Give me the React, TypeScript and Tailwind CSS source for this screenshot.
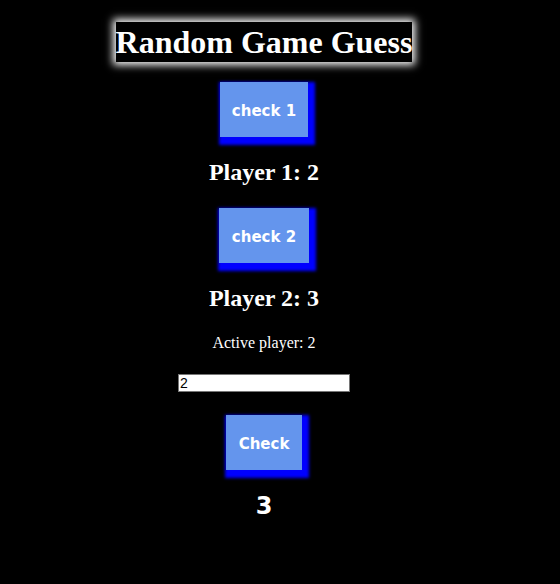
const comic = "font-['Comic_Sans_MS','DejaVu_Sans',sans-serif]"

const GameButton = ({ label, width }: { label: string; width: string }) => (
  <button
    className={`${width} h-[55px] pt-[3px] bg-[#6495ed] text-white font-bold text-[15px] ${comic} shadow-[3px_4px_3px_4px_#0000ff]`}
  >
    {label}
  </button>
)

export default function App() {
  return (
    <div className="min-h-[584px] bg-black text-white font-['Liberation_Serif',serif]">
      <div className="w-[528px] flex flex-col items-center">
        <h1 className="mt-[22px] h-[40px] w-[296px] flex items-center justify-center bg-black text-[32px] font-bold leading-none whitespace-nowrap shadow-[0_0_8px_3px_#ffffff]">
          Random Game Guess
        </h1>

        <div className="mt-[20px]">
          <GameButton label="check 1" width="w-[88px]" />
        </div>
        <h2 className="mt-[21px] h-[28px] text-[24px] font-bold leading-[28px]">Player 1: 2</h2>

        <div className="mt-[22px]">
          <GameButton label="check 2" width="w-[90px]" />
        </div>
        <h2 className="mt-[21px] h-[28px] text-[24px] font-bold leading-[28px]">Player 2: 3</h2>

        <p className="mt-[22px] h-[18px] text-[16px] leading-[18px]">Active player: 2</p>

        <input
          defaultValue="2"
          className="mt-[22px] w-[172px] h-[18px] bg-white text-black text-[14px] leading-none px-[1px] border border-[#767676] font-['Liberation_Sans',sans-serif] outline-none"
        />

        <div className="mt-[23px]">
          <GameButton label="Check" width="w-[76px]" />
        </div>

        <p className={`mt-[22px] text-[24px] font-bold leading-[28px] ${comic}`}>3</p>
      </div>
    </div>
  )
}
